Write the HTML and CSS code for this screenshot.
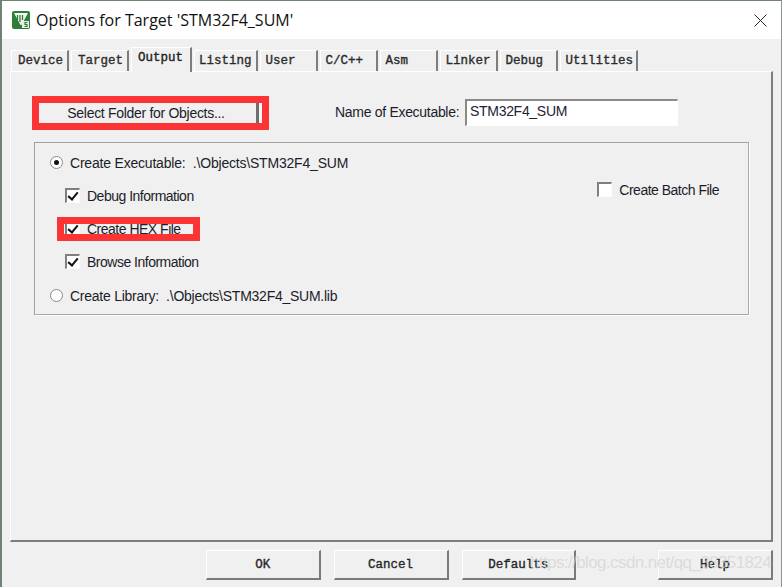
FILE: index.html
```html
<!DOCTYPE html>
<html lang="en">
<head>
<meta charset="utf-8">
<title>Options for Target</title>
<link rel="stylesheet" href="styles.css">
</head>
<body>
<div class="window">
  <header class="titlebar">
    <svg class="app-icon" width="18" height="18" viewBox="0 0 18 18">
      <rect width="18" height="18" rx="2" fill="#2f7d3b"/>
      <path d="M2 2h14L9.500 14h-1z" fill="#f4f7f0"/>
      <path d="M5.500 4v5M8 4v7M10.500 4v5" stroke="#2f7d3b" stroke-width="1.300" fill="none"/>
      <path d="M10 10h7v7h-7z" fill="#e8efe4"/>
      <path d="M15.500 11.500h-2.500v2h2v2h-2.500" stroke="#2f7d3b" stroke-width="1.200" fill="none"/>
    </svg>
    <span class="title-text">Options for Target 'STM32F4_SUM'</span>
    <svg class="close-icon" width="13" height="13" viewBox="0 0 13 13">
      <path d="M.5.500l12 12M12.500.500l-12 12" stroke="#222" stroke-width="1" fill="none"/>
    </svg>
  </header>
  <main class="dialog">
    <nav class="tabs">
      <span class="tab">Device</span>
      <span class="tab">Target</span>
      <span class="tab active">Output</span>
      <span class="tab">Listing</span>
      <span class="tab">User</span>
      <span class="tab">C/C++</span>
      <span class="tab">Asm</span>
      <span class="tab">Linker</span>
      <span class="tab">Debug</span>
      <span class="tab">Utilities</span>
    </nav>
    <section class="panel">
      <div class="top-row">
        <div class="folder-wrap"><button class="folder-btn">Select Folder for Objects...</button></div>
        <label class="name-label">Name of Executable:</label>
        <div class="name-input">STM32F4_SUM</div>
      </div>
      <div class="group">
        <div class="group-main">
          <div class="opt radio-row"><span class="radio on"></span>Create Executable:&nbsp; .\Objects\STM32F4_SUM</div>
          <div class="opt check-row"><span class="check on"></span>Debug Information</div>
          <div class="opt check-row hex"><span class="check on"></span>Create HEX File<span class="mark"></span></div>
          <div class="opt check-row"><span class="check on"></span>Browse Information</div>
          <div class="opt radio-row lib"><span class="radio"></span>Create Library:&nbsp; .\Objects\STM32F4_SUM.lib</div>
        </div>
        <div class="opt batch"><span class="check"></span>Create Batch File</div>
      </div>
    </section>
    <footer class="actions">
      <button class="act">OK</button>
      <button class="act">Cancel</button>
      <button class="act">Defaults</button>
      <button class="act help">Help</button>
    </footer>
  </main>
  <div class="watermark">https://blog.csdn.net/qq_38351824</div>
</div>
</body>
</html>
```
FILE: styles.css
```css
* { box-sizing: border-box; }
html, body { margin: 0; padding: 0; }
body { width: 782px; height: 587px; overflow: hidden; background: #f0f0f0; }
.window {
  position: relative; width: 782px; height: 587px; overflow: hidden;
  display: flex; flex-direction: column;
  border-top: 1px solid #6f8273; border-left: 2px solid #6f8273; border-right: 1px solid #8a9a8e;
  font-family: "Liberation Sans", sans-serif; color: #1c1c2a; font-size: 14px;
}
.titlebar { height: 38px; flex: none; background: #fff; display: flex; align-items: center; padding: 0 14px 0 10px; }
.app-icon { margin-right: 6px; }
.title-text { font-family: "Open Sans", sans-serif; font-size: 16px; color: #111; flex: 1; white-space: nowrap; }
.dialog { flex: 1; display: flex; flex-direction: column; background: #f0f0f0; padding: 0 8px 0 8px; }
.tabs { height: 32px; display: flex; align-items: flex-end; gap: 2px; padding-left: 1px; position: relative; z-index: 1; }
.tab {
  height: 21px; min-width: 58px; padding: 3px 3px 0 6px;
  font-family: "Liberation Mono", monospace; font-size: 12.500px;
  -webkit-text-stroke: .35px #222;
  color: #333; white-space: pre; background: #f0f0f0;
  border-top: 1px solid #fff; border-left: 1px solid #fff; border-right: 2px solid #7d7d7d;
}
.tab.active { height: 25px; min-width: 61px; padding-top: 3px; margin-bottom: -1px; color: #222; }
.tab.active ~ .tab { padding-left: 5px; }
.tab.active + .tab { padding-left: 4px; padding-right: 4px; }
.panel {
  flex: 1; padding: 26px 23px 0 23px;
  border-top: 1px solid #fff; border-left: 1px solid #fff;
  border-right: 2px solid #7d7d7d; border-bottom: 2px solid #7d7d7d;
}
.top-row { display: flex; align-items: center; height: 28px; }
.folder-wrap {
  width: 237px; height: 34px; margin: 2px 0 0 -2px; flex: none;
  border: 7px solid #fb3535; padding-right: 3px; background: #f6f6f6;
}
.folder-btn {
  display: block; width: 220px; height: 20px; padding: 0 3px 0 0;
  background: #f0f0f0; border: 0; border-right: 3px solid #6f6f6f;
  font: inherit; font-size: 14px; color: #1c1c2a; letter-spacing: -.3px;
}
.name-label { margin-left: 66px; width: 130px; flex: none; letter-spacing: -.3px; white-space: nowrap; }
.name-input {
  width: 213px; height: 27px; padding: 2px 3px; background: #fff;
  border: 1px solid #fff; border-top: 2px solid #8a8a8a; border-left: 2px solid #8a8a8a;
  font-size: 14px; letter-spacing: -.3px; color: #223;
}
.group {
  margin: 16px 0 0 0; width: 715px; height: 173px; padding: 11px 29px 0 15px;
  display: flex; justify-content: space-between;
  border: 1px solid #a2a2a2; border-right-color: #a8a8a8; border-bottom-color: #a8a8a8;
  box-shadow: 1px 1px 0 #fff;
}
.group-main { display: flex; flex-direction: column; gap: 16px; }
.opt { display: flex; align-items: center; height: 17px; white-space: nowrap; letter-spacing: -.2px; }
.check-row { padding-left: 15px; letter-spacing: -.5px; }
.lib { margin-top: 1px; letter-spacing: -.25px; }
.hex { position: relative; }
.radio {
  width: 13px; height: 13px; margin-right: 7px; border-radius: 50%; background: #fff;
  border: 1px solid #8b8b8b; display: flex; align-items: center; justify-content: center; flex: none;
}
.radio.on::after { content: ""; width: 5px; height: 5px; border-radius: 50%; background: #111; }
.check {
  width: 15px; height: 15px; margin-right: 7px; background: #fff; flex: none;
  border-top: 2px solid #7f7f7f; border-left: 2px solid #7f7f7f; border-right: 1px solid #fbfbfb; border-bottom: 1px solid #fbfbfb;
  display: flex; align-items: center; justify-content: center;
}
.check.on::after {
  content: ""; width: 4px; height: 8px; margin-top: -2px; border: solid #111; border-width: 0 2px 2px 0; transform: rotate(40deg);
}
.mark {
  position: absolute; left: 7px; top: -3px; width: 143px; height: 24px;
  border: 7px solid #fb3535;
}
.batch { margin-top: 27px; letter-spacing: -.5px; }
.actions { height: 45px; flex: none; display: flex; align-items: flex-start; padding: 8px 0 0 196px; gap: 13px; }
.act {
  width: 115px; height: 30px; padding: 0;
  background: #f0f0f0; border: 1px solid #fff; border-right: 2px solid #7a7a7a; border-bottom: 2px solid #7a7a7a;
  font-family: "Liberation Mono", monospace; font-size: 12.500px; -webkit-text-stroke: .35px #222; color: #2a2a2a;
}
.help { margin-left: 69px; }
.watermark {
  position: absolute; left: 528px; top: 552px;
  font-size: 17px; letter-spacing: -.6px; color: rgba(210, 210, 210, .7); white-space: nowrap;
}
```
